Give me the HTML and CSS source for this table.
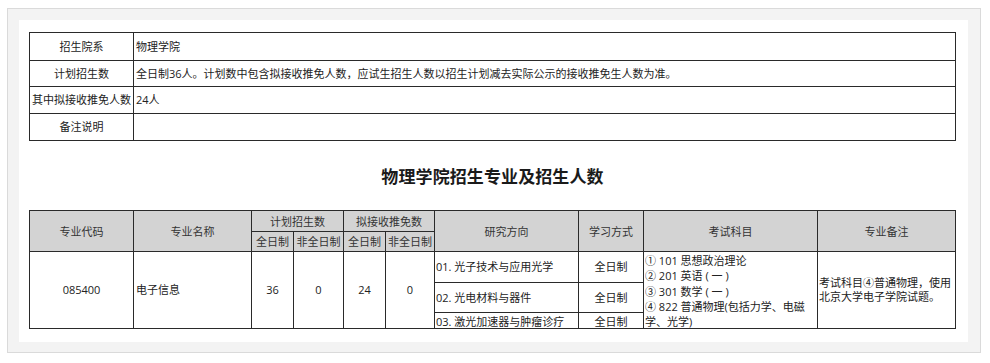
FILE: index.html
```html
<!DOCTYPE html>
<html lang="zh">
<head>
<meta charset="utf-8">
<link rel="stylesheet" href="styles.css">
</head>
<body>
<div class="frame">
  <div class="sheet">
    <table class="info">
      <colgroup><col class="c-label"><col></colgroup>
      <tr class="r1"><td class="label">招生院系</td><td>物理学院</td></tr>
      <tr class="r2"><td class="label">计划招生数</td><td>全日制36人。计划数中包含拟接收推免人数，应试生招生人数以招生计划减去实际公示的接收推免生人数为准。</td></tr>
      <tr class="r3"><td class="label">其中拟接收推免人数</td><td>24人</td></tr>
      <tr class="r4"><td class="label">备注说明</td><td></td></tr>
    </table>

    <div class="title">物理学院招生专业及招生人数</div>

    <table class="major">
      <colgroup>
        <col class="w104"><col class="w118"><col class="w42"><col class="w50"><col class="w42"><col class="w49"><col class="w144"><col class="w65"><col class="w174"><col>
      </colgroup>
      <tr class="h1">
        <th rowspan="2">专业代码</th>
        <th rowspan="2">专业名称</th>
        <th colspan="2">计划招生数</th>
        <th colspan="2">拟接收推免数</th>
        <th rowspan="2">研究方向</th>
        <th rowspan="2">学习方式</th>
        <th rowspan="2">考试科目</th>
        <th rowspan="2">专业备注</th>
      </tr>
      <tr class="h2">
        <th>全日制</th><th>非全日制</th><th>全日制</th><th>非全日制</th>
      </tr>
      <tr class="b1">
        <td rowspan="3" class="center">085400</td>
        <td rowspan="3">电子信息</td>
        <td rowspan="3" class="center">36</td>
        <td rowspan="3" class="center">0</td>
        <td rowspan="3" class="center">24</td>
        <td rowspan="3" class="center">0</td>
        <td class="dir">01. 光子技术与应用光学</td>
        <td class="center">全日制</td>
        <td rowspan="3" class="exam"><div class="exam-box">
          <div>① 101 思想政治理论</div>
          <div>② 201 英语 ( 一 )</div>
          <div>③ 301 数学 ( 一 )</div>
          <div>④ 822 普通物理(包括力学、电磁</div>
          <div>学、光学)</div>
        </div></td>
        <td rowspan="3" class="note">考试科目④普通物理，使用<br>北京大学电子学院试题。</td>
      </tr>
      <tr class="b2">
        <td class="dir">02. 光电材料与器件</td>
        <td class="center">全日制</td>
      </tr>
      <tr class="b3">
        <td class="dir"><div class="clip">03. 激光加速器与肿瘤诊疗</div></td>
        <td class="center"><div class="clip">全日制</div></td>
      </tr>
    </table>
  </div>
</div>
</body>
</html>
```

FILE: styles.css
```css
html, body {
  margin: 0;
  padding: 0;
  background: #ffffff;
}

body {
  font-family: "Open Sans", "Noto Sans CJK SC", sans-serif;
  color: #222222;
}

.frame {
  margin: 8px 9px 0 7px;
  height: 345px;
  box-sizing: border-box;
  border: 1px solid #dadada;
  background: #f3f3f3;
  padding: 11px 12px 10px 11px;
}

.sheet {
  background: #ffffff;
  height: 322px;
  box-sizing: border-box;
  padding: 12px 12px 0 10px;
  overflow: hidden;
}

table {
  border-collapse: collapse;
  table-layout: fixed;
  width: 927px;
  font-size: 11px;
}

td, th {
  border: 1px solid #2a2a2a;
  padding: 0 2px;
  font-weight: normal;
  white-space: nowrap;
  overflow: hidden;
}

.w104 { width: 104px; }
.w118 { width: 118px; }
.w42 { width: 42px; }
.w50 { width: 50px; }
.w49 { width: 49px; }
.w144 { width: 144px; }
.w65 { width: 65px; }
.w174 { width: 174px; }

.info .c-label { width: 104px; }
.info td { line-height: 14px; }
.info .label { text-align: center; padding: 0; }
.info .r1 { height: 28px; }
.info .r2 { height: 26px; }
.info .r3 { height: 27px; }
.info .r4 { height: 27px; }

.title {
  margin: 24px 0 21px;
  height: 24px;
  line-height: 24px;
  text-align: center;
  font-size: 17px;
  font-weight: bold;
  color: #1a1a1a;
  letter-spacing: 0.1px;
}

.major th {
  background: #d3d3d3;
  color: #333;
  text-align: center;
  line-height: 13px;
  padding: 0;
}
.major .h1 { height: 21px; }
.major .h2 { height: 20px; }
.major .b1 { height: 31px; }
.major .b2 { height: 30px; }
.major .b3 { height: 16px; }
.major td { line-height: 14px; }
.major .center { text-align: center; }
.major .dir { padding-left: 1px; }

.clip {
  height: 15px;
  line-height: 17px;
  overflow: hidden;
}

.exam { vertical-align: top; padding: 0 0 0 1px; }
.exam-box {
  height: 76px;
  overflow: hidden;
  padding-top: 1px;
  line-height: 15.3px;
  box-sizing: border-box;
}

.note { line-height: 16px; padding-left: 1px; }
```
